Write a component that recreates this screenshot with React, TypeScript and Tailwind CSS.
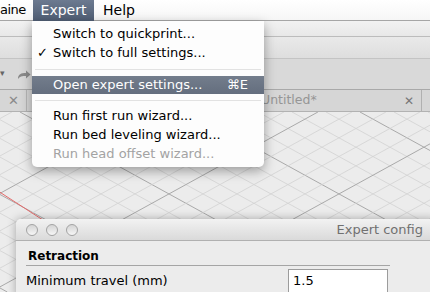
import React from "react"

const font = { fontFamily: '"DejaVu Sans", "Liberation Sans", sans-serif' }

const GridFloor = () => {
  const ids = Array.from({ length: 40 }, (_, i) => i - 12)
  const s = 0.55
  return (
    <svg className="absolute inset-0" width="430" height="180" viewBox="0 0 430 180">
      {ids.map((k) => {
        const x0 = 120 - 55 / s + k * 34
        const major = k % 5 === 0
        return (
          <line
            key={"a" + k}
            x1={x0}
            y1={0}
            x2={x0 + 180 / s}
            y2={180}
            stroke={major ? "#a9a9a9" : "#d2d2d2"}
            strokeWidth={major ? 1 : 0.8}
          />
        )
      })}
      {ids.map((k) => {
        const x0 = 167 + 83 / s + k * 34
        const major = k % 5 === 0
        return (
          <line
            key={"b" + k}
            x1={x0}
            y1={0}
            x2={x0 - 180 / s}
            y2={180}
            stroke={major ? "#a9a9a9" : "#d2d2d2"}
            strokeWidth={major ? 1 : 0.8}
          />
        )
      })}
      <line x1={-2} y1={79} x2={60} y2={119} stroke="#e46a6a" strokeWidth={1} />
    </svg>
  )
}

const MenuRow = ({ children, check, disabled }: { children: React.ReactNode; check?: boolean; disabled?: boolean }) => (
  <div className={`h-[19px] flex items-center pl-[21px] text-[13px] leading-[19px] ${disabled ? "text-[#a3a3a3]" : "text-black"}`}>
    <span className="w-[6px] -ml-[16px] mr-[10px] text-[13px]">{check ? "✓" : ""}</span>
    {children}
  </div>
)

const Separator = ({ h }: { h: string }) => (
  <div className={`${h} flex items-center px-[3px]`}>
    <div className="w-full h-px bg-[#e2e2e2]" />
  </div>
)

export default function App() {
  return (
    <div className="relative w-[430px] h-[292px] overflow-hidden bg-[#ebebeb]" style={font}>
      {/* menubar */}
      <div className="h-[21px] flex items-center bg-gradient-to-b from-[#ffffff] to-[#f6f6f6] border-b border-[#a6a6a6] text-[14px] text-black">
        <span className="w-[33px] text-[13px] tracking-[-0.5px] whitespace-nowrap">aine</span>
        <span className="h-[21px] w-[61px] flex items-center justify-center bg-gradient-to-b from-[#6c7a90] to-[#4f5d73] text-white">
          Expert
        </span>
        <span className="ml-[9px]">Help</span>
      </div>

      {/* title / toolbar */}
      <div className="h-[16px] bg-gradient-to-b from-[#f2f2f2] to-[#e8e8e8] border-b border-[#bcbcbc]" />
      <div className="h-[22px] bg-gradient-to-b from-[#e9e9e9] to-[#dedede] border-b border-[#c4c4c4]" />
      <div className="h-[31px] bg-[#d9d9d9] border-b border-[#a9a9a9] flex items-center">
        <span className="text-[9px] text-[#666]">▾</span>
        <svg width="14" height="10" viewBox="0 0 14 10" className="ml-[12px] mt-[2px]">
          <path d="M1 9 C1 4 4 3 9 3 L9 0.5 L13.5 4.5 L9 8.5 L9 6 C5 6 2.5 6.5 1 9 Z" fill="#8a8a8a" />
        </svg>
      </div>

      {/* tabs */}
      <div className="h-[22px] bg-[#d6d6d6] border-b border-[#b2b2b2] flex items-center text-[12.5px]">
        <div className="w-[27px] h-full border-r border-[#b5b5b5] flex items-center justify-center">
          <span className="text-[13px] font-bold text-[#8a8a8a] pl-[1px]">✕</span>
        </div>
        <div className="flex-1 h-full flex items-center pl-[234px] text-[#959595]">Untitled*</div>
        <span className="text-[12px] font-bold text-[#777] mr-[7px]">✕</span>
        <div className="w-[9px] h-full border-l border-[#b0b0b0]" />
      </div>

      {/* viewport */}
      <div className="relative h-[181px] bg-[#ececec]">
        <GridFloor />
      </div>

      {/* Expert menu */}
      <div className="absolute left-[32px] top-[21px] w-[232px] bg-[#fdfdfd] rounded-b-[5px] shadow-[0_4px_12px_rgba(0,0,0,0.35)] pt-[3px] pb-[4px]">
        <MenuRow>Switch to quickprint...</MenuRow>
        <MenuRow check>Switch to full settings...</MenuRow>
        <Separator h="h-[14px]" />
        <div className="h-[18px] flex items-center justify-between pl-[21px] pr-[16px] bg-gradient-to-b from-[#737d8c] to-[#646e7e] text-white text-[13px]">
          <span>Open expert settings...</span>
          <span>⌘E</span>
        </div>
        <Separator h="h-[12px]" />
        <MenuRow>Run first run wizard...</MenuRow>
        <MenuRow>Run bed leveling wizard...</MenuRow>
        <MenuRow disabled>Run head offset wizard...</MenuRow>
      </div>

      {/* Expert config dialog */}
      <div className="absolute left-[16px] top-[219px] w-[420px] h-[80px] rounded-tl-[5px] bg-[#ececec] shadow-[0_0_10px_rgba(0,0,0,0.3)] overflow-hidden">
        <div className="h-[22px] flex items-center justify-between bg-gradient-to-b from-[#f2f2f2] to-[#dadada] border-b border-[#b0b0b0]">
          <div className="flex items-center gap-[8px] pl-[10px]">
            <span className="w-[12px] h-[12px] rounded-full border border-[#a2a2a2] bg-gradient-to-b from-[#d4d4d4] to-[#f6f6f6]" />
            <span className="w-[12px] h-[12px] rounded-full border border-[#a2a2a2] bg-gradient-to-b from-[#d4d4d4] to-[#f6f6f6]" />
            <span className="w-[12px] h-[12px] rounded-full border border-[#a2a2a2] bg-gradient-to-b from-[#d4d4d4] to-[#f6f6f6]" />
          </div>
          <span className="pr-[13px] text-[13px] text-[#707070]">Expert config</span>
        </div>
        <div className="px-[10px]">
          <div className="w-[364px] h-[25px] border-b border-[#a5a5a5] pt-[8px] pl-[2px] text-[12px] leading-[15px] font-bold text-black">
            Retraction
          </div>
          <div className="w-[362px] flex items-start justify-between">
            <span className="mt-[7px] text-[13px] leading-[16px] text-black">Minimum travel (mm)</span>
            <div className="mt-[3px] w-[100px] h-[24px] border border-[#9c9c9c] bg-white pl-[4px] text-[13px] leading-[22px] text-black">
              1.5
            </div>
          </div>
        </div>
      </div>
    </div>
  )
}
